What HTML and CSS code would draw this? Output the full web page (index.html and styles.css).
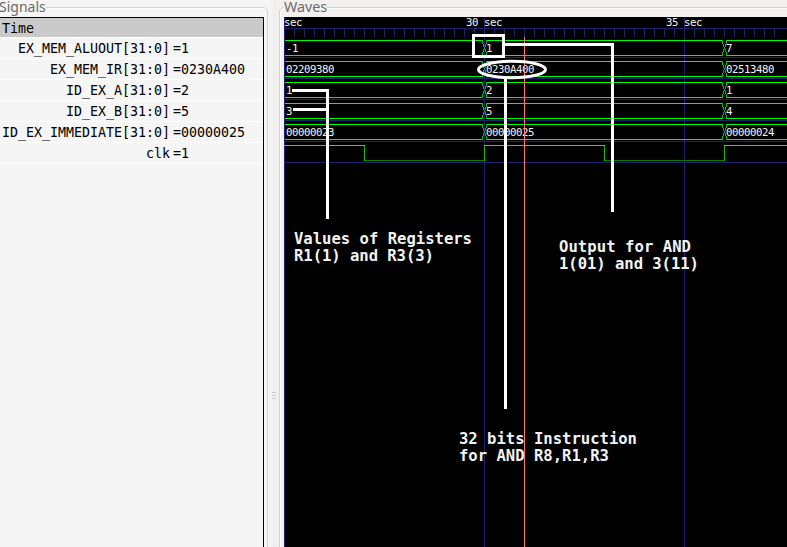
FILE: index.html
```html
<!DOCTYPE html>
<html lang="en">
<head>
<meta charset="utf-8">
<title>Waveform viewer</title>
<link rel="stylesheet" href="styles.css">
</head>
<body>
<main class="viewer">
  <section class="signals">
    <h2 class="title">Signals</h2>
    <div class="list">
      <div class="time">Time</div>
      <div class="row"><span class="name">EX_MEM_ALUOUT[31:0]</span><span class="value">=1</span></div>
      <div class="row"><span class="name">EX_MEM_IR[31:0]</span><span class="value">=0230A400</span></div>
      <div class="row"><span class="name">ID_EX_A[31:0]</span><span class="value">=2</span></div>
      <div class="row"><span class="name">ID_EX_B[31:0]</span><span class="value">=5</span></div>
      <div class="row"><span class="name">ID_EX_IMMEDIATE[31:0]</span><span class="value">=00000025</span></div>
      <div class="row"><span class="name">clk</span><span class="value">=1</span></div>
    </div>
  </section>
  <div class="splitter"><i></i><i></i><i></i></div>
  <section class="waves">
    <h2 class="title">Waves</h2>
    <svg class="canvas" width="503" height="530" viewBox="284 17 503 530">
      <defs>
        <g id="bus">
          <path class="high" d="M285 .5H482M487 .5H722M727 .5H787M285 15.5H482M487 15.5H722M727 15.5H787"/>
          <path class="edge" d="M482.5 0v4M483.5 4v3M484.5 7v2M483.5 9v3M482.5 12v4M486.5 0v4M485.5 4v3M485.5 9v3M486.5 12v4M722.5 0v4M723.5 4v3M724.5 7v2M723.5 9v3M722.5 12v4M726.5 0v4M725.5 4v3M725.5 9v3M726.5 12v4"/>
        </g>
        <pattern id="ticks" x="284" y="28" width="10" height="9" patternUnits="userSpaceOnUse">
          <rect width="1" height="9" fill="#202070"/>
        </pattern>
      </defs>
      <rect x="284" y="17" width="503" height="530"/>
      <rect x="284" y="28" width="493" height="9" fill="url(#ticks)"/>
      <path class="grid" d="M284 28.5H787M284.5 17V547M484.5 17V547M684.5 17V547M285 57.5H787M285 78.5H787M285 99.5H787M285 120.5H787M285 141.5H787M285 162.5H787"/>
      <g class="note">
        <text x="294" y="244" textLength="178">Values of Registers</text>
        <text x="294" y="261" textLength="140">R1(1) and R3(3)</text>
        <text x="559" y="252" textLength="132">Output for AND</text>
        <text x="559" y="269" textLength="140">1(01) and 3(11)</text>
        <text x="459" y="444" textLength="178">32 bits Instruction</text>
        <text x="459" y="461" textLength="150">for AND R8,R1,R3</text>
      </g>
      <use href="#bus" y="40"/>
      <use href="#bus" y="61"/>
      <use href="#bus" y="82"/>
      <use href="#bus" y="103"/>
      <use href="#bus" y="124"/>
      <path class="low" d="M365 160.5H484M605 160.5H724"/>
      <path class="edge" d="M364.5 145V161M484.5 145V161M604.5 145V161M724.5 145V161"/>
      <path class="high" d="M284 145.5H365M484 145.5H605M724 145.5H787"/>
      <g class="label">
        <text x="284" y="26">sec</text><text x="466" y="26">30 sec</text><text x="666" y="26">35 sec</text>
        <text x="286" y="52">-1</text><text x="486" y="52">1</text><text x="726" y="52">7</text>
        <text x="286" y="73">02209380</text><text x="486" y="73">0230A400</text><text x="726" y="73">02513480</text>
        <text x="286" y="94">1</text><text x="486" y="94">2</text><text x="726" y="94">1</text>
        <text x="286" y="115">3</text><text x="486" y="115">5</text><text x="726" y="115">4</text>
        <text x="286" y="136">00000023</text><text x="486" y="136">00000025</text><text x="726" y="136">00000024</text>
      </g>
      <path class="marker" d="M524.5 37V547"/>
      <g class="callout">
        <rect x="473.5" y="35.5" width="30" height="21"/>
        <path d="M505 44.5H612.5V212M505.5 79V409M292 90.5H327.5V219M293 109.5H327"/>
        <ellipse cx="512" cy="69.5" rx="33.5" ry="8.2"/>
      </g>
    </svg>
  </section>
</main>
</body>
</html>
```
FILE: styles.css
```css
body { margin: 0; background: #f5f5f5; overflow: hidden; }
.viewer { display: grid; grid-template-columns: 268px 11px 508px; height: 547px; }
.signals, .waves { position: relative; height: 547px; overflow: hidden; }
.signals::before, .waves::before {
  content: ""; position: absolute; top: 7px; bottom: -10px;
  border: 1px solid #d3d1cf; box-shadow: inset 0 1px #fff;
}
.signals::before { left: -10px; right: 0; border-radius: 0 5px 0 0; }
.waves::before { left: 0; right: -10px; border-radius: 5px 0 0; box-shadow: inset 1px 1px #fff; }
.title {
  position: relative; width: max-content; margin: 0; height: 17px;
  font: 14px/14px "Noto Sans", sans-serif; color: #6c6a68; background: #f5f5f5;
}
.signals .title { margin-left: -1px; }
.waves .title { margin-left: 5px; font-size: 14.3px; background: #f2f1f0; }
.list {
  position: relative; box-sizing: border-box; width: 264px; height: 530px;
  border-top: 1px solid #000; border-right: 1px solid #000;
  font: 13.3px/20px "DejaVu Sans Mono", monospace; color: #000;
}
.time { height: 19px; line-height: 22px; padding-left: 2px; background: #cacaca; border-bottom: 1px solid #fff; }
.row { display: flex; height: 20px; line-height: 21px; border-bottom: 1px solid #fff; white-space: pre; }
.name { width: 170px; text-align: right; }
.value { margin-left: 3px; }
.splitter {
  display: flex; flex-direction: column; align-items: center; justify-content: center; gap: 2px;
  padding-top: 244px; background: linear-gradient(90deg, #f5f5f5 2px, #efeeed 6px, #f2f1f0);
}
.splitter i { width: 4px; height: 1px; background: #cfcdcb; }
.waves { background: #f2f1f0; }
.canvas { position: relative; display: block; margin-left: 5px; }
.grid { stroke: #202070; fill: none; }
.high { stroke: #00ff00; fill: none; }
.edge { stroke: #00c000; fill: none; }
.low { stroke: #008000; fill: none; }
.marker { stroke: #ff7474; }
.label { font: 10.7px "DejaVu Sans Mono", monospace; letter-spacing: -.44px; fill: #f4f4f4; }
.note { font: bold 15.6px "DejaVu Sans Mono", monospace; fill: #f2f2f2; }
.callout { stroke: #fff; stroke-width: 3; fill: none; }
```
